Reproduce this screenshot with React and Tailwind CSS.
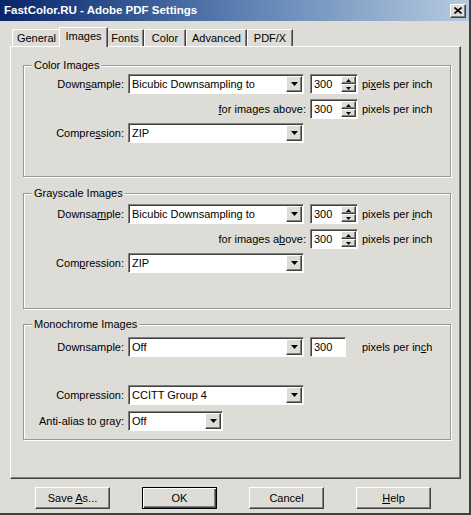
import clsx from "clsx";

const FONT = "font-['Liberation_Sans',Arial,sans-serif]";

const RAISED =
  "border border-t-white border-l-white border-r-[#404040] border-b-[#404040] shadow-[inset_-1px_-1px_0_#808080]";
const SUNKEN =
  "border border-t-[#808080] border-l-[#808080] border-r-white border-b-white shadow-[inset_1px_1px_0_#404040]";

function DownArrow() {
  return (
    <svg width="7" height="4" viewBox="0 0 7 4">
      <path d="M0 0h7L3.5 4z" fill="#000" />
    </svg>
  );
}

function Select({ value, width }) {
  return (
    <div className={clsx("flex h-[20px] items-stretch bg-white p-[1px]", SUNKEN, width)}>
      <span className="flex flex-1 items-center pl-[2px] pt-[1px] text-black">{value}</span>
      <div className={clsx("flex w-[16px] items-center justify-center bg-[#dedcd6]", RAISED)}>
        <DownArrow />
      </div>
    </div>
  );
}

function Spin({ value, arrows = true, width = "w-[48px]" }) {
  return (
    <div className={clsx("flex h-[20px] items-stretch bg-white p-[1px]", SUNKEN, width)}>
      <span className="flex flex-1 items-center pl-[2px] pt-[1px]">{value}</span>
      {arrows && (
        <div className="flex w-[15px] flex-col">
          <div className={clsx("flex flex-1 items-center justify-center bg-[#dedcd6]", RAISED)}>
            <svg width="5" height="3" viewBox="0 0 5 3">
              <path d="M0 3h5L2.5 0z" fill="#000" />
            </svg>
          </div>
          <div className={clsx("flex flex-1 items-center justify-center bg-[#dedcd6]", RAISED)}>
            <svg width="5" height="3" viewBox="0 0 5 3">
              <path d="M0 0h5L2.5 3z" fill="#000" />
            </svg>
          </div>
        </div>
      )}
    </div>
  );
}

function Group({ title, height, className, children }) {
  return (
    <div
      className={clsx(
        "relative ml-[12px] w-[428px] border border-[#9a9893] shadow-[inset_1px_1px_0_white,1px_1px_0_white]",
        height,
        className,
      )}
    >
      <span className="absolute -top-[8px] left-[8px] bg-[#dedcd6] px-[2px] leading-[14px]">{title}</span>
      {children}
    </div>
  );
}

function Row({ className, children }) {
  return <div className={clsx("flex h-[20px] items-center", className)}>{children}</div>;
}

function Label({ children, width = "w-[100px]" }) {
  return <span className={clsx("shrink-0 text-right", width)}>{children}</span>;
}

const TABS = [
  { name: "General", w: "w-[49px]" },
  { name: "Images", w: "w-[49px]", active: true },
  { name: "Fonts", w: "w-[38px]" },
  { name: "Color", w: "w-[42px]" },
  { name: "Advanced", w: "w-[61px]" },
  { name: "PDF/X", w: "w-[46px]" },
];

function Button({ children, def }) {
  return (
    <div
      className={clsx(
        "flex h-[22px] w-[75px] items-center justify-center bg-[#dedcd6]",
        def
          ? "border border-black shadow-[inset_1px_1px_0_white,inset_-1px_-1px_0_#404040,inset_-2px_-2px_0_#808080]"
          : RAISED,
      )}
    >
      <span>{children}</span>
    </div>
  );
}

export default function App() {
  return (
    <div
      className={clsx(
        "flex h-[515px] w-[471px] flex-col overflow-hidden border-r-2 border-b-2 border-r-[#404040] border-b-[#404040] bg-[#dedcd6] text-[11px] leading-none text-black",
        FONT,
      )}
    >
      {/* Title bar */}
      <div className="flex h-[21px] shrink-0 items-center justify-between bg-gradient-to-r from-[#0a246a] via-[#5a7eb0] to-[#b7cbe0] pl-[4px] pr-[3px]">
        <span className="text-[11.5px] font-bold text-white">FastColor.RU - Adobe PDF Settings</span>
        <div className={clsx("flex h-[14px] w-[16px] items-center justify-center bg-[#dedcd6]", RAISED)}>
          <svg width="8" height="7" viewBox="0 0 8 7">
            <path d="M0.5 0.5l7 6M7.5 0.5l-7 6" stroke="#000" strokeWidth="1.6" />
          </svg>
        </div>
      </div>

      {/* Tabs */}
      <div className="mt-[6px] ml-[12px] flex h-[19px] items-end">
        {TABS.map((t) => (
          <div
            key={t.name}
            className={clsx(
              "flex items-center justify-center border-t border-l border-r border-t-white border-l-white border-r-[#404040] shadow-[inset_-1px_0_0_#808080]",
              t.w,
              t.active
                ? "relative z-10 -mx-[2px] -mb-[1px] h-[20px] bg-[#dedcd6] pb-[3px]"
                : "h-[17px] pt-[1px]",
            )}
          >
            {t.name}
          </div>
        ))}
      </div>

      {/* Tab panel */}
      <div className={clsx("ml-[10px] flex h-[433px] w-[451px] flex-col pt-[18px]", RAISED)}>
        <Group title="Color Images" height="h-[112px]">
          <Row className="mt-[8px]">
            <Label>
              Down<u>s</u>ample:
            </Label>
            <div className="ml-[4px]">
              <Select value="Bicubic Downsampling to" width="w-[176px]" />
            </div>
            <div className="ml-[6px]">
              <Spin value="300" />
            </div>
            <span className="ml-[4px]">
              pi<u>x</u>els per inch
            </span>
          </Row>
          <Row className="mt-[5px]">
            <Label width="w-[282px]">
              <u>f</u>or images above:
            </Label>
            <div className="ml-[4px]">
              <Spin value="300" />
            </div>
            <span className="ml-[4px]">pixels per inch</span>
          </Row>
          <Row className="mt-[4px]">
            <Label>
              Compre<u>s</u>sion:
            </Label>
            <div className="ml-[4px]">
              <Select value="ZIP" width="w-[176px]" />
            </div>
          </Row>
        </Group>

        <Group title="Grayscale Images" height="h-[116px]" className="mt-[16px]">
          <Row className="mt-[10px]">
            <Label>
              Downsa<u>m</u>ple:
            </Label>
            <div className="ml-[4px]">
              <Select value="Bicubic Downsampling to" width="w-[176px]" />
            </div>
            <div className="ml-[6px]">
              <Spin value="300" />
            </div>
            <span className="ml-[4px]">
              pixels per <u>i</u>nch
            </span>
          </Row>
          <Row className="mt-[5px]">
            <Label width="w-[282px]">
              for images a<u>b</u>ove:
            </Label>
            <div className="ml-[4px]">
              <Spin value="300" />
            </div>
            <span className="ml-[4px]">pixels per inch</span>
          </Row>
          <Row className="mt-[4px]">
            <Label>
              Com<u>p</u>ression:
            </Label>
            <div className="ml-[4px]">
              <Select value="ZIP" width="w-[176px]" />
            </div>
          </Row>
        </Group>

        <Group title="Monochrome Images" height="h-[116px]" className="mt-[15px]">
          <Row className="mt-[12px]">
            <Label>Downsample:</Label>
            <div className="ml-[4px]">
              <Select value="Off" width="w-[176px]" />
            </div>
            <div className="ml-[6px]">
              <Spin value="300" arrows={false} width="w-[36px]" />
            </div>
            <span className="ml-[16px]">
              pixels per in<u>c</u>h
            </span>
          </Row>
          <Row className="mt-[28px]">
            <Label>Compression:</Label>
            <div className="ml-[4px]">
              <Select value="CCITT Group 4" width="w-[176px]" />
            </div>
          </Row>
          <Row className="mt-[6px]">
            <Label>Anti-alias to gray:</Label>
            <div className="ml-[4px]">
              <Select value="Off" width="w-[95px]" />
            </div>
          </Row>
        </Group>
      </div>

      {/* Buttons */}
      <div className="mt-[8px] ml-[35px] flex gap-[32px]">
        <Button>
          {"Save "}
          <u>A</u>s...
        </Button>
        <Button def>OK</Button>
        <Button>Cancel</Button>
        <Button>
          <u>H</u>elp
        </Button>
      </div>
    </div>
  );
}
